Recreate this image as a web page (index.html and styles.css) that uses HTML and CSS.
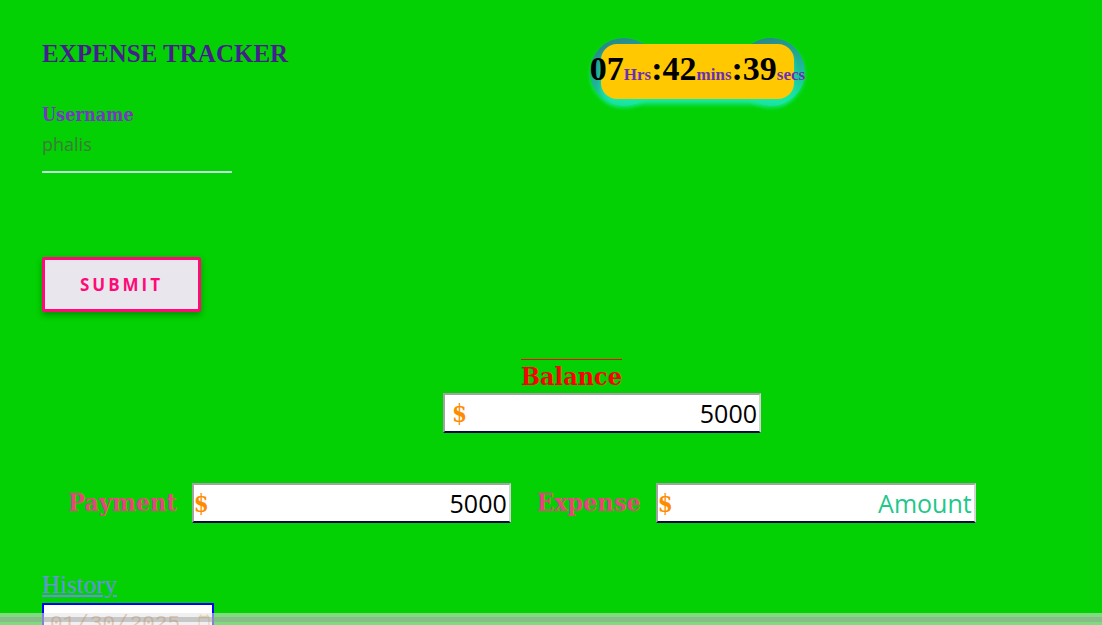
FILE: index.html
```html
<!DOCTYPE html>
<html lang="en">
<head>
<meta charset="utf-8">
<title>Expense Tracker</title>
<link rel="stylesheet" href="styles.css">
</head>
<body>
<div class="page">
  <header class="top">
    <h1 class="title">EXPENSE TRACKER</h1>
    <div class="timer">
      <div class="clock">
        <div class="time"><span class="num">07</span><span class="unit">Hrs</span><span class="num">:42</span><span class="unit">mins</span><span class="num">:39</span><span class="unit">secs</span></div>
      </div>
    </div>
  </header>

  <form class="user">
    <label class="ulabel" for="uname">Username</label>
    <input class="uinput" id="uname" type="text" value="phalis">
    <button class="submit" type="button">SUBMIT</button>
  </form>

  <section class="balance">
    <h2 class="bal-title">Balance</h2>
    <div class="money bal-box">
      <span class="dollar">$</span>
      <input class="amount" type="text" value="5000">
    </div>
  </section>

  <section class="entries">
    <span class="elabel">Payment</span>
    <div class="money pay-box">
      <span class="dollar">$</span>
      <input class="amount" type="text" value="5000">
    </div>
    <span class="elabel exp">Expense</span>
    <div class="money exp-box">
      <span class="dollar">$</span>
      <input class="amount" type="text" placeholder="Amount">
    </div>
  </section>

  <div class="history-wrap"><a class="history" href="#">History</a></div>
  <input class="date" type="date" value="2025-01-30">
</div>
<div class="hbar"><div class="hthumb"></div></div>
</body>
</html>
```

FILE: styles.css
```css
html, body {
  margin: 0;
  padding: 0;
}
body {
  background: #03d103;
  overflow: hidden;
}
.page {
  padding: 38px 42px 0 42px;
}

/* header */
.top {
  display: grid;
  grid-template-columns: 548px auto;
  align-items: start;
  height: 67px;
}
.title {
  margin: 1px 0 0 0;
  font-family: "Liberation Serif", serif;
  font-weight: bold;
  font-size: 25px;
  line-height: 29px;
  color: #461e8c;
  white-space: nowrap;
}
.timer {
  position: relative;
  width: 215px;
  height: 68px;
  box-sizing: border-box;
  padding: 6px 11px 7px 11px;
}
.timer::before,
.timer::after {
  content: "";
  position: absolute;
  top: 0;
  width: 68px;
  height: 68px;
  border-radius: 50%;
  background: linear-gradient(160deg, #2a7d86 0%, #1fb59a 55%, #16f0a6 100%);
  box-shadow: 0 2px 4px rgba(22, 240, 166, 0.6);
}
.timer::before { left: 0; }
.timer::after { right: 0; }
.clock {
  position: relative;
  z-index: 1;
  height: 55px;
  background: #ffc800;
  border-radius: 16px;
  display: flex;
  justify-content: center;
  align-items: center;
  box-shadow: 0 5px 5px #19eaa6;
}
.time {
  white-space: nowrap;
  font-family: "Liberation Serif", serif;
  font-weight: bold;
  line-height: 34px;
}
.num {
  font-size: 34px;
  color: #000;
}
.unit {
  font-size: 17px;
  color: #6a2fb5;
}

/* user form */
.user {
  display: flex;
  flex-direction: column;
  align-items: flex-start;
}
.ulabel {
  font-family: "DejaVu Serif", serif;
  font-stretch: condensed;
  font-weight: bold;
  font-size: 18px;
  line-height: 20px;
  color: #7a35c8;
}
.uinput {
  margin-top: 7px;
  width: 190px;
  box-sizing: border-box;
  padding: 0 0 14px 0;
  border: none;
  border-bottom: 2px solid #bfe6e0;
  background: transparent;
  outline: none;
  font-family: "Open Sans", sans-serif;
  font-size: 18px;
  line-height: 25px;
  color: #3e7a3e;
}
.submit {
  margin-top: 84px;
  width: 159px;
  height: 55px;
  box-sizing: border-box;
  border: 3px solid #ff0a78;
  border-radius: 2px;
  background: #e9e6ee;
  color: #ff0a78;
  font-family: "Open Sans", sans-serif;
  font-weight: bold;
  font-size: 17px;
  letter-spacing: 3px;
  padding: 0;
  box-shadow: 0 3px 6px rgba(0, 0, 0, 0.3);
}

/* balance */
.balance {
  margin-top: 47px;
  margin-left: 401px;
  display: flex;
  flex-direction: column;
  align-items: flex-start;
}
.bal-title {
  margin: 0 0 2px 78px;
  padding-top: 3px;
  border-top: 1px solid #ff0000;
  font-family: "DejaVu Serif", serif;
  font-stretch: condensed;
  font-weight: bold;
  font-size: 25px;
  line-height: 28px;
  color: #ff0000;
}
.money {
  display: flex;
  align-items: center;
  height: 40px;
  box-sizing: border-box;
  background: #fff;
  border: 2px solid #a3a3a3;
  border-right-color: #d4d4d4;
  border-bottom-color: #07074f;
}
.bal-box {
  width: 318px;
  padding: 0 2px 0 7px;
}
.pay-box {
  width: 319px;
  padding: 0 2px 0 0;
}
.exp-box {
  width: 320px;
  padding: 0 2px 0 0;
}
.dollar {
  font-family: "DejaVu Serif", serif;
  font-stretch: condensed;
  font-weight: bold;
  font-size: 24px;
  color: #ff8c00;
}
.amount {
  flex: 1;
  min-width: 0;
  border: none;
  outline: none;
  background: transparent;
  padding: 0;
  text-align: right;
  font-family: "Open Sans", sans-serif;
  font-size: 25px;
  color: #000;
}
.amount::placeholder {
  color: #1fc78a;
  opacity: 1;
}

/* entries */
.entries {
  margin-top: 50px;
  padding-left: 26px;
  display: flex;
  align-items: center;
}
.elabel {
  font-family: "DejaVu Serif", serif;
  font-stretch: condensed;
  font-weight: bold;
  font-size: 25px;
  line-height: 28px;
  color: #e8457c;
  margin-right: 15px;
}
.elabel.exp {
  margin-left: 26px;
}

/* history */
.history-wrap {
  margin-top: 48px;
  font-family: "Liberation Serif", serif;
  font-size: 25px;
  line-height: 28px;
}
.history {
  color: #6c8ee8;
  text-decoration: underline;
}
.date {
  margin-top: 4px;
  display: block;
  width: 172px;
  height: 40px;
  box-sizing: border-box;
  border: 2px solid #0000ff;
  background: #fff;
  padding: 0 1px 0 5px;
  font-family: "Liberation Mono", monospace;
  font-size: 21px;
  color: #dfa36b;
}
.date::-webkit-datetime-edit {
  padding: 0;
}
.date::-webkit-calendar-picker-indicator {
  filter: invert(0.6) sepia(1) saturate(2);
  margin: 0;
  padding: 0;
  width: 14px;
  height: 18px;
}

/* horizontal scrollbar overlay */
.hbar {
  position: fixed;
  left: 0;
  right: 0;
  bottom: 0;
  height: 12px;
  box-sizing: border-box;
  padding: 4px 0 3px 0;
  background: rgba(228, 228, 228, 0.55);
}
.hthumb {
  height: 5px;
  background: rgba(150, 150, 150, 0.45);
}
```
